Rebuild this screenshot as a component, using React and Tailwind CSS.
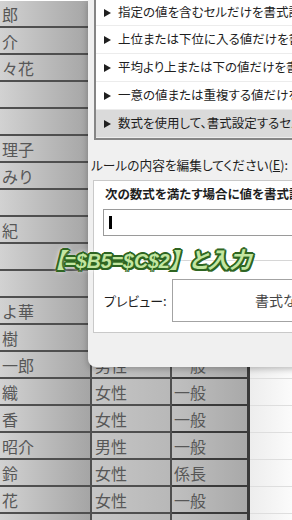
const rows = [
  ["郎", "女性", "一般"],
  ["介", "男性", "一般"],
  ["々花", "女性", "一般"],
  ["", "", ""],
  ["", "", ""],
  ["理子", "女性", "一般"],
  ["みり", "女性", "一般"],
  ["", "", ""],
  ["紀", "女性", "一般"],
  ["", "", ""],
  ["", "", ""],
  ["よ華", "女性", "一般"],
  ["樹", "男性", "一般"],
  ["一郎", "男性", "一般"],
  ["織", "女性", "一般"],
  ["香", "女性", "一般"],
  ["昭介", "男性", "一般"],
  ["鈴", "女性", "係長"],
  ["花", "女性", "一般"],
  ["", "", ""],
]

const ruleTypes = [
  "指定の値を含むセルだけを書式設定",
  "上位または下位に入る値だけを書式設定",
  "平均より上または下の値だけを書式設定",
  "一意の値または重複する値だけを書式設定",
  "数式を使用して、書式設定するセルを決定",
]

function Arrow() {
  return (
    <svg width="7" height="8" viewBox="0 0 7 8" className="shrink-0">
      <polygon points="0,0 7,4 0,8" fill="#1f1f1f" />
    </svg>
  )
}

function Sheet() {
  return (
    <div className="flex flex-col pt-[1px] text-[16px] text-[#575757]">
      {rows.map((r, i) => (
        <div key={i} className="flex h-[27px]">
          <div className="flex w-[92px] items-center border-b-2 border-r-2 border-[#4f4f4f] bg-linear-to-r from-[#d2d2d2] to-[#a5a5a5] pl-[2px]">
            {r[0]}
          </div>
          <div className="flex w-[80px] items-center border-b-2 border-r-2 border-[#4f4f4f] bg-linear-to-r from-[#c6c6c6] to-[#b8b8b8] pl-[3px]">
            {r[1]}
          </div>
          <div className="flex w-[78px] items-center border-b-2 border-r-[3px] border-[#3a3a3a] bg-linear-to-r from-[#c0c0c0] to-[#a9a9a9] pl-[2px]">
            {r[2]}
          </div>
          <div className="flex-1 border-b border-[#dedede] bg-linear-to-r from-[#ededed] to-[#fbfbfb]" />
        </div>
      ))}
    </div>
  )
}

function RuleDialog() {
  return (
    <div className="absolute left-[88px] top-0 flex h-[367px] w-[240px] flex-col rounded-bl-[8px] bg-[#f0f0f0] text-[12.5px] text-[#1e1e1e] shadow-[0_2px_6px_rgba(0,0,0,0.25)] [font-feature-settings:'palt']">
      {/* rule type list */}
      <div className="ml-[6px] flex h-[140px] flex-col border-b-2 border-l-2 border-[#858585] bg-white">
        {ruleTypes.map((t, i) => (
          <div
            key={t}
            className={`flex items-center gap-[7px] whitespace-nowrap border-b border-[#ececec] pl-[8px] ${
              i === 0 ? "h-[26px]" : "h-[28px]"
            } ${i === 4 ? "bg-[#dadada]" : ""}`}
          >
            <Arrow />
            {t}
          </div>
        ))}
      </div>

      <div className="flex h-[40px] items-end whitespace-nowrap pb-[6px] pl-[3px] text-[12.7px]">
        ルールの内容を編集してください(<span className="underline">E</span>):
      </div>

      {/* rule description */}
      <div className="ml-[5px] flex h-[153px] flex-col border border-[#c9c9c9] bg-white">
        <div className="mt-[4px] whitespace-nowrap pl-[11px] font-bold leading-[18px]">
          次の数式を満たす場合に値を書式設定(O):
        </div>
        <div className="ml-[9px] mt-[6px] flex h-[27px] items-center border border-[#9a9a9a] bg-white">
          <div className="ml-[5px] h-[13px] w-[3px] bg-black" />
        </div>
        <div className="ml-[9px] mt-[24px] h-px bg-[#d6d6d6]" />
        <div className="mt-[18px] flex items-center">
          <div className="w-[78px] shrink-0 whitespace-nowrap pl-[10px] text-[13px]">プレビュー:</div>
          <div className="flex h-[43px] min-w-[220px] items-center whitespace-nowrap border border-[#a3a3a3] pl-[82px] text-[14px] text-[#444]">
            書式なし
          </div>
        </div>
      </div>
    </div>
  )
}

export default function App() {
  return (
    <div className="relative h-[520px] w-[292px] overflow-hidden bg-white font-['Noto_Sans_CJK_JP',sans-serif]">
      <Sheet />
      <RuleDialog />
      <div className="absolute left-[54px] top-[248px] flex items-baseline whitespace-nowrap font-['Liberation_Sans','Noto_Sans_CJK_JP',sans-serif] text-[21px] font-bold italic leading-[26px] text-[#c2e6a0] [font-feature-settings:'palt'] [text-shadow:2px_0_0_#2e6522,-2px_0_0_#2e6522,0_2px_0_#2e6522,0_-2px_0_#2e6522,1.5px_1.5px_0_#2e6522,-1.5px_1.5px_0_#2e6522,1.5px_-1.5px_0_#2e6522,-1.5px_-1.5px_0_#2e6522,0_0_5px_#fff,0_0_7px_#fff]">
        <span>【</span>
        <span className="text-[19.5px]">=$B5=$C$2</span>
        <span className="mr-[9px]">】</span>
        <span className="text-[22px]">と入力</span>
      </div>
    </div>
  )
}
